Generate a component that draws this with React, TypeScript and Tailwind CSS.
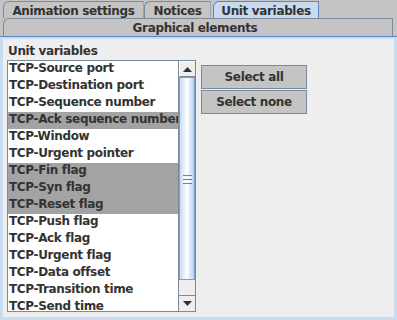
import React from "react";

const items: [string, boolean][] = [
  ["TCP-Source port", false],
  ["TCP-Destination port", false],
  ["TCP-Sequence number", false],
  ["TCP-Ack sequence number", true],
  ["TCP-Window", false],
  ["TCP-Urgent pointer", false],
  ["TCP-Fin flag", true],
  ["TCP-Syn flag", true],
  ["TCP-Reset flag", true],
  ["TCP-Push flag", false],
  ["TCP-Ack flag", false],
  ["TCP-Urgent flag", false],
  ["TCP-Data offset", false],
  ["TCP-Transition time", false],
  ["TCP-Send time", false],
];

function Tab({ label, w, selected }: { label: string; w: string; selected?: boolean }) {
  return (
    <div
      className={
        "h-[17px] flex items-center justify-center rounded-tl-[6px] border-t border-l border-r leading-none " +
        w +
        (selected
          ? " bg-[#c8daf0] border-[#6382bf]"
          : " bg-[#c4c4c4] border-t-[#7a8a99] border-l-[#7a8a99] border-r-[#9aa5b0]")
      }
    >
      <span className="pt-[1px]">{label}</span>
    </div>
  );
}

export default function App() {
  return (
    <div className="w-[397px] h-[320px] overflow-hidden bg-[#c4c4c4] text-[#333333] font-['DejaVu_Sans',sans-serif] font-bold text-[12px] tracking-[-0.35px] flex flex-col">
      {/* tab row 1 */}
      <div className="h-[18px] flex items-end pl-[3px]">
        <Tab label="Animation settings" w="w-[141px]" />
        <Tab label="Notices" w="w-[67px]" />
        <div className="w-[2px]" />
        <Tab label="Unit variables" w="w-[106px]" selected />
      </div>
      {/* tab row 2 */}
      <div className="h-[18px] flex items-end pl-[3px] pr-[4px]">
        <div className="h-[18px] w-full flex items-center justify-center rounded-tl-[6px] border-t border-l border-r border-t-[#7a8a99] border-l-[#7a8a99] border-r-[#7a8a99] bg-[#c4c4c4] leading-none">
          <span className="pr-[6px] pt-[1px]">Graphical elements</span>
        </div>
      </div>
      {/* panel */}
      <div className="flex-1 border-t border-[#6382bf] flex flex-col">
        <div className="flex-1 border-t-[2px] border-l-[3px] border-r-[3px] border-b-[3px] border-[#c8ddf2] bg-[#eeeeee] flex flex-col">
          <div className="ml-[5px] mt-[4px] h-[17px] leading-[16px]">Unit variables</div>
          <div className="flex items-start">
            <div className="ml-[4px] w-[189px] h-[252px] border border-[#7a8a99] bg-white flex overflow-hidden">
              <div className="w-[170px] flex flex-col">
                {items.map(([t, sel]) => (
                  <div
                    key={t}
                    className={"h-[17px] shrink-0 leading-[15px] pl-[1px] whitespace-nowrap " + (sel ? "bg-[#a3a3a3]" : "")}
                  >
                    {t}
                  </div>
                ))}
              </div>
              <div className="w-[17px] flex flex-col bg-[#eeeeee] border-l border-[#7a8a99]">
                <div className="h-[16px] shrink-0 bg-[#eeeeee] border-b border-[#7a8a99] flex items-center justify-center border-t border-t-white border-l border-l-white">
                  <svg width="9" height="5" viewBox="0 0 9 5">
                    <polygon points="0,5 9,5 4.5,0" fill="#333333" />
                  </svg>
                </div>
                <div className="h-[203px] shrink-0 border border-[#7a9ccf] bg-gradient-to-r from-[#c6dbf0] via-[#ffffff] to-[#b8cfe6] flex items-center justify-center">
                  <div className="flex flex-col gap-[1px] mt-[1px]">
                    <div className="w-[9px] h-[1px] bg-[#6382bf]" />
                    <div className="w-[9px] h-[1px] bg-white" />
                    <div className="w-[9px] h-[1px] bg-[#6382bf]" />
                    <div className="w-[9px] h-[1px] bg-white" />
                    <div className="w-[9px] h-[1px] bg-[#6382bf]" />
                  </div>
                </div>
                <div className="flex-1" />
                <div className="h-[16px] shrink-0 bg-[#eeeeee] border-t border-[#7a8a99] flex items-center justify-center">
                  <svg width="9" height="5" viewBox="0 0 9 5">
                    <polygon points="0,0 9,0 4.5,5" fill="#333333" />
                  </svg>
                </div>
              </div>
            </div>
            <div className="ml-[5px] mt-[5px] w-[106px] flex flex-col gap-[1px]">
              <div className="h-[24px] border border-[#7a8a99] bg-[#c4c4c4] flex items-center justify-center leading-none">
                Select all
              </div>
              <div className="h-[24px] border border-[#7a8a99] bg-[#c4c4c4] flex items-center justify-center leading-none">
                Select none
              </div>
            </div>
          </div>
        </div>
      </div>
    </div>
  );
}
